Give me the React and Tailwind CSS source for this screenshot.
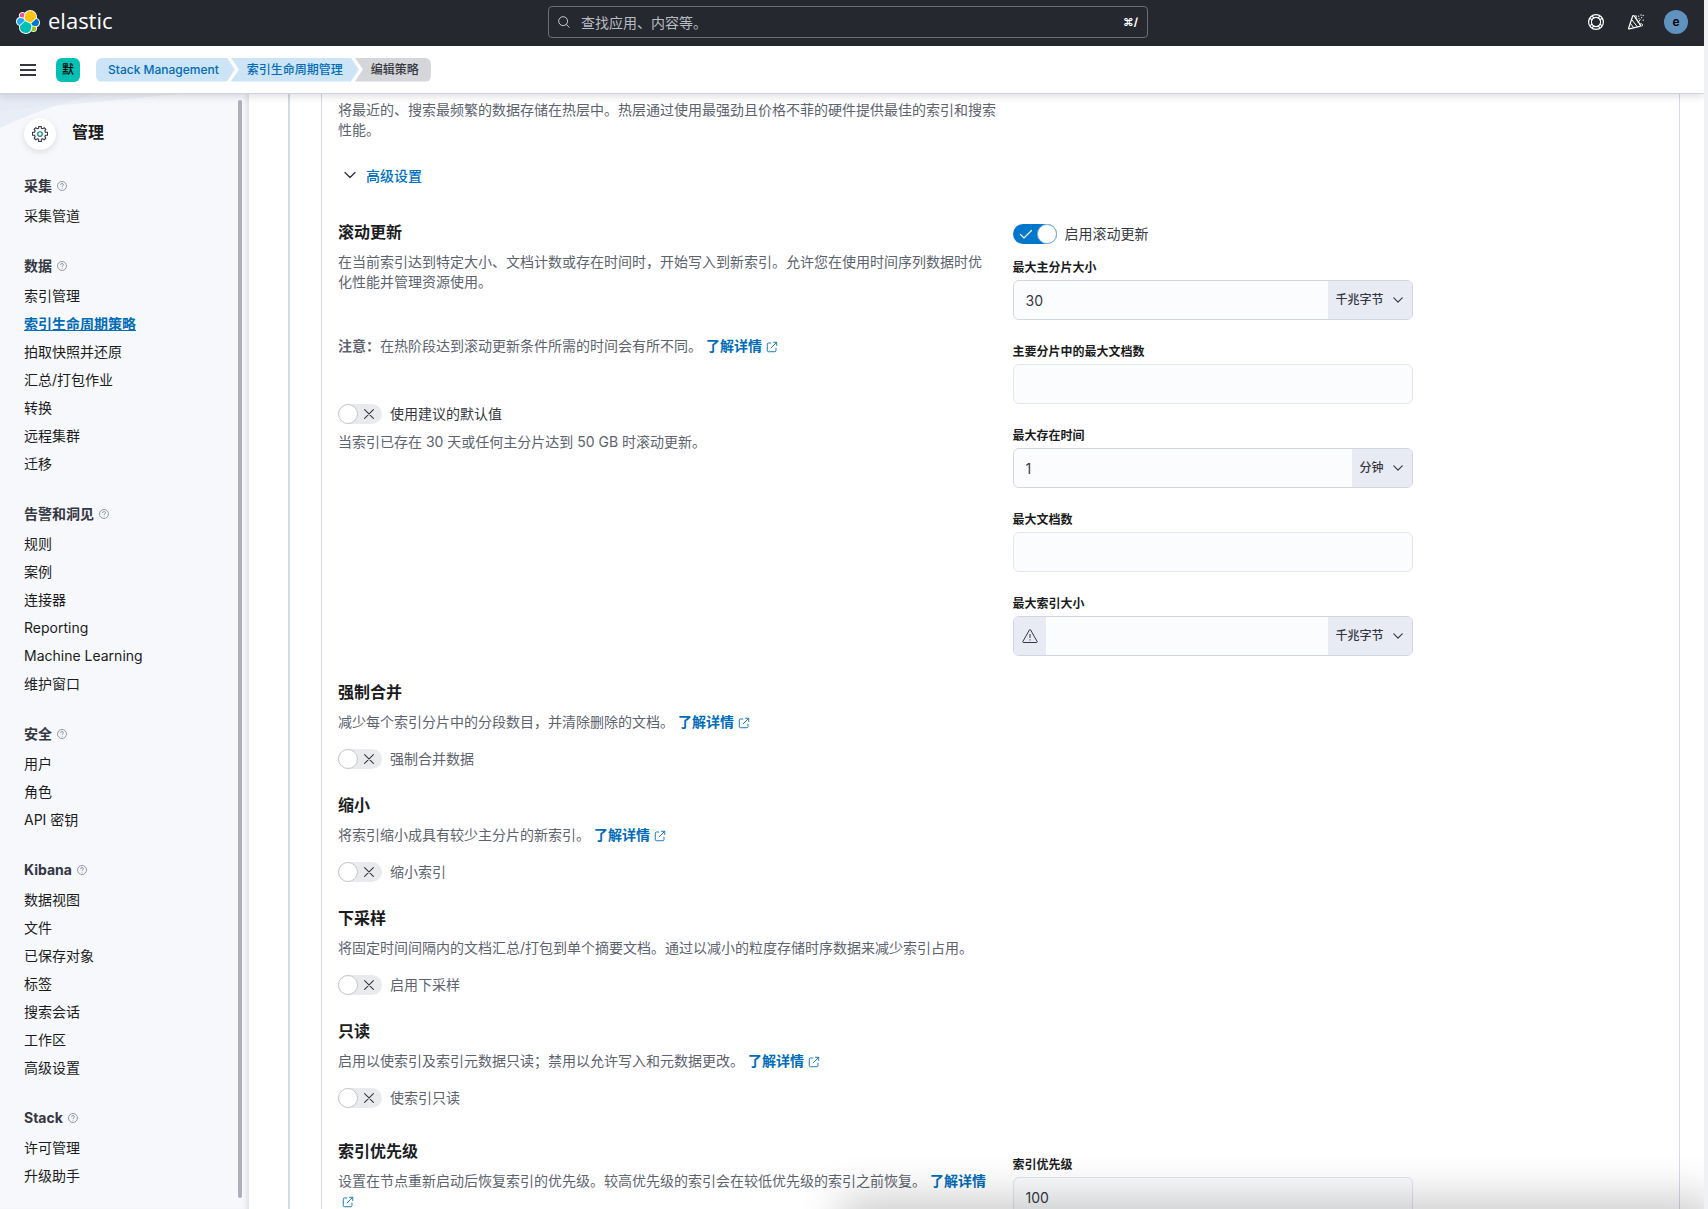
import React from "react";

const sections = [
  { title: "采集", items: ["采集管道"] },
  { title: "数据", items: ["索引管理", "索引生命周期策略", "拍取快照并还原", "汇总/打包作业", "转换", "远程集群", "迁移"], active: 1 },
  { title: "告警和洞见", items: ["规则", "案例", "连接器", "Reporting", "Machine Learning", "维护窗口"] },
  { title: "安全", items: ["用户", "角色", "API 密钥"] },
  { title: "Kibana", items: ["数据视图", "文件", "已保存对象", "标签", "搜索会话", "工作区", "高级设置"] },
  { title: "Stack", items: ["许可管理", "升级助手"] },
];

function ElasticLogo() {
  return (
    <svg className="h-6 w-6" viewBox="0 0 32 32" aria-hidden="true">
      <path fill="#fff" d="M32 16.77c0-2.68-1.66-5.02-4.16-5.94.11-.57.17-1.15.17-1.74 0-5.01-4.07-9.09-9.08-9.09a9.09 9.09 0 0 0-7.34 3.75 4.8 4.8 0 0 0-2.94-1A4.82 4.82 0 0 0 4.1 9.21 6.36 6.36 0 0 0 0 15.2c0 2.69 1.67 5.04 4.18 5.96-.11.56-.17 1.14-.17 1.72A9.07 9.07 0 0 0 20.4 28.2a4.79 4.79 0 0 0 2.96 1.02 4.82 4.82 0 0 0 4.54-6.43A6.37 6.37 0 0 0 32 16.77z" />
      <path fill="#FEC514" d="M12.58 13.787l7.002 3.211 7.066-6.213a7.849 7.849 0 00.152-1.557c0-4.287-3.464-7.774-7.722-7.774a7.713 7.713 0 00-6.376 3.371l-1.176 6.14 1.054 2.822z" />
      <path fill="#00BFB3" d="M5.333 21.214a7.902 7.902 0 00-.152 1.586c0 4.3 3.484 7.8 7.764 7.8a7.76 7.76 0 006.417-3.4l1.167-6.107-1.556-2.989-7.03-3.218-6.61 6.328z" />
      <path fill="#F04E98" d="M5.29 9.098l4.798 1.138 1.051-5.485a3.79 3.79 0 00-2.31-.786 3.813 3.813 0 00-3.79 3.83c0 .453.078.886.25 1.303z" />
      <path fill="#1BA9F5" d="M4.872 10.244a5.46 5.46 0 00-3.589 5.1 5.43 5.43 0 003.47 5.05l6.73-6.12-1.236-2.659-5.375-1.371z" />
      <path fill="#93C90E" d="M20.873 27.251a3.773 3.773 0 002.296.785 3.8 3.8 0 003.777-3.823c0-.47-.083-.9-.248-1.303l-4.788-1.127-1.037 5.468z" />
      <path fill="#0077CC" d="M21.848 20.563l5.28 1.245a5.488 5.488 0 003.59-5.106c0-2.266-1.397-4.28-3.478-5.076l-6.904 6.083 1.512 2.854z" />
    </svg>
  );
}

function HelpIcon() {
  return (
    <svg className="h-4 w-4" viewBox="0 0 16 16" fill="none" stroke="currentColor" aria-hidden="true">
      <circle cx="8" cy="8" r="7.4" strokeWidth="1.2" />
      <circle cx="8" cy="8" r="4.6" strokeWidth="1.1" />
      <path strokeWidth="1.2" d="M2.1 4.400l2.700 1.700M4.400 2.100l1.700 2.700M13.900 4.400l-2.700 1.700M11.600 2.100l-1.700 2.700M2.100 11.600l2.700-1.700M4.400 13.900l1.700-2.700M13.900 11.600l-2.700-1.700M11.600 13.900l-1.700-2.700" />
    </svg>
  );
}

function CheerIcon() {
  return (
    <svg className="h-4 w-4" viewBox="0 0 16 16" fill="none" stroke="currentColor" strokeLinecap="round" strokeLinejoin="round" aria-hidden="true">
      <path strokeWidth="1.2" d="M4.6 2.2L.6 14.2c-.1.5.2.8.7.7l10.5-2.6c.8-.2 1-.9.5-1.4L6.200 1.900c-.5-.5-1.300-.4-1.600.3z" />
      <path d="M3.600 5.500l5.700 7.200M2.300 9.300l3.300 4.300M7.500 4.800c.9-.8 1.100-2 .5-3.300M10 8.500l2.200-2.800M11.700 10.300c.9-.8 2.300-.7 2.800.2.400.8-.1 1.600-.800 1.700" />
      <path strokeWidth="1.300" d="M10.700 2.200v.01M13 1v.01M13.600 3.600v.01M15.200 6.200v.01M11 4.600v.01M15.200 1.500v.01M9.300 6.500v.01" />
    </svg>
  );
}

function GearIcon() {
  return (
    <svg className="h-4 w-4" viewBox="0 0 16 16" fill="none" aria-hidden="true">
      <path stroke="#343741" strokeWidth="1.100" strokeLinejoin="round" d="M6.700.5h2.600v1.700l1.500.6 1.300-1.100 1.800 1.800-1.100 1.300.6 1.500h2.100v2.900h-2.100l-.6 1.500 1.100 1.300-1.800 1.800-1.300-1.100-1.500.6v2.200H6.700v-2.200l-1.500-.6-1.300 1.100-1.800-1.800 1.100-1.300-.6-1.500H.5V6.300h2.100l.6-1.500-1.100-1.300 1.800-1.800 1.300 1.100 1.500-.6z" />
      <circle cx="8" cy="8" r="2.300" stroke="#017D73" strokeWidth="1.100" />
    </svg>
  );
}

function QuestionIcon() {
  return (
    <svg className="h-[10px] w-[10px] text-[#7c828e]" viewBox="0 0 16 16" fill="none" stroke="currentColor" strokeWidth="1.300" aria-hidden="true">
      <circle cx="8" cy="8" r="7.200" />
      <path d="M5.700 6.300c0-1.400 1-2.300 2.300-2.300s2.300.8 2.300 2c0 1.700-2.300 1.700-2.300 3.500M8 10.900v1.400" />
    </svg>
  );
}

function ExternalLink({ children }) {
  return (
    <a href="#" className="font-bold text-[#006bb8]">
      {children}
      <svg className="ml-1 inline h-3 w-3 align-[-2px]" viewBox="0 0 16 16" fill="none" stroke="currentColor" strokeWidth="1.200" aria-hidden="true">
        <path d="M7 2.700H3.200c-.9 0-1.500.6-1.500 1.500v8.600c0 .9.600 1.500 1.500 1.500h8.600c.9 0 1.500-.6 1.500-1.500V9M9.500 1.700h4.800v4.800M14.100 1.900L6.500 9.500" />
      </svg>
    </a>
  );
}

function Chevron({ className }) {
  return (
    <svg className={className} viewBox="0 0 12 8" fill="none" stroke="currentColor" strokeWidth="1.400" strokeLinecap="round" strokeLinejoin="round" aria-hidden="true">
      <path d="M1 1.500l5 5 5-5" />
    </svg>
  );
}

function Switch({ label, on = false, dark = false }) {
  return (
    <label className="flex h-5 items-center gap-2 text-[14px] leading-5">
      <span className="relative flex h-5 w-11 shrink-0">
        <input type="checkbox" role="switch" defaultChecked={on} className="peer h-5 w-11 appearance-none rounded-full bg-[#e9eaee] checked:bg-[#0077cc]" />
        {on ? (
          <svg className="pointer-events-none absolute left-[6px] top-1 h-3 w-[14px] text-white" viewBox="0 0 14 12" fill="none" stroke="currentColor" strokeWidth="1.200" strokeLinecap="round" aria-hidden="true">
            <path d="M1.500 6.500l3.500 3.500 7.500-7.500" />
          </svg>
        ) : (
          <svg className="pointer-events-none absolute right-2 top-[5px] h-[10px] w-[10px] text-[#343741]" viewBox="0 0 10 10" fill="none" stroke="currentColor" strokeWidth="1.100" strokeLinecap="round" aria-hidden="true">
            <path d="M.600.600l8.800 8.800M9.400.600L.600 9.400" />
          </svg>
        )}
        <span className="pointer-events-none absolute left-0 top-0 h-5 w-5 rounded-full border border-[#c4c6cb] bg-white peer-checked:left-6 peer-checked:border-[#8fb6d6]" />
      </span>
      <span className={dark ? "text-[#343741]" : "text-[#5c626e]"}>{label}</span>
    </label>
  );
}

function Field({ id, label, value = "", unit, warn }) {
  const grouped = Boolean(unit);
  return (
    <div className="flex max-w-[400px] flex-col gap-1">
      <label htmlFor={id} className="text-[12px] font-bold leading-4 text-[#1a1c21]">{label}</label>
      <div className={grouped ? "flex h-10 overflow-hidden rounded-md border border-[#d0d5e6] bg-[#fbfcfd]" : "flex h-10 overflow-hidden rounded-md border border-[#e2e4ef] bg-[#fbfcfd]"}>
        {warn && (
          <span className="flex w-8 shrink-0 items-center justify-center bg-[#e9ebf4] text-[#343741]">
            <svg className="h-4 w-4" viewBox="0 0 16 16" fill="none" stroke="currentColor" strokeLinejoin="round" aria-hidden="true">
              <path d="M7.500 1.800c.2-.4.800-.4 1 0l6.700 11.800c.2.400 0 .900-.5.900H1.300c-.5 0-.7-.5-.5-.9zM8 6v4M8 11.300v1.200" />
            </svg>
          </span>
        )}
        <input id={id} type="text" defaultValue={value} className="min-w-0 flex-1 bg-transparent px-3 text-[14px] text-[#343741] outline-none" />
        {unit && (
          <span className="relative flex shrink-0 items-center bg-[#e9ebf4] text-[#343741]">
            <select aria-label={label + "单位"} className="h-full appearance-none bg-transparent pl-2 pr-[27px] text-[12px] font-medium outline-none">
              <option>{unit}</option>
            </select>
            <Chevron className="pointer-events-none absolute right-[9px] h-2 w-[10px]" />
          </span>
        )}
      </div>
    </div>
  );
}

function Title({ children }) {
  return <h3 className="text-[16px] font-bold leading-6 text-[#1a1c21]">{children}</h3>;
}

function Text({ children, className = "" }) {
  return <p className={"text-[14px] leading-5 text-[#5c626e] " + className}>{children}</p>;
}

function ToggleSection({ title, text, link, label }) {
  return (
    <section className="flex flex-col">
      <Title>{title}</Title>
      <Text className="mt-2">{text}{link && <> <ExternalLink>了解详情</ExternalLink></>}</Text>
      <div className="mt-[17px]"><Switch label={label} /></div>
    </section>
  );
}

export default function App() {
  return (
    <div className="h-screen overflow-hidden bg-[#f0f1f5] pr-1 font-['Inter','Noto_Sans_CJK_SC',sans-serif] text-[#343741]">
      <div className="relative flex h-full flex-col overflow-hidden bg-white">
        <header className="grid h-[46px] shrink-0 grid-cols-[1fr_600px_1fr] items-center bg-[#25282f] pb-[2px] pl-4 pr-6 text-white">
          <a href="#" className="flex items-center gap-2">
            <ElasticLogo />
            <span className="pb-1 font-['Open_Sans'] text-[22px] font-normal leading-6">elastic</span>
          </a>
          <div className="flex h-8 items-center rounded border border-[#6b6e76] px-[9px]">
            <svg className="h-3 w-3 text-[#dfe5ef]" viewBox="0 0 14 14" fill="none" stroke="currentColor" aria-hidden="true">
              <circle cx="6" cy="6" r="5.200" />
              <path d="M9.700 9.700l3.600 3.800" />
            </svg>
            <input type="search" aria-label="搜索" placeholder="查找应用、内容等。" className="ml-[11px] min-w-0 flex-1 bg-transparent text-[14px] outline-none placeholder:text-[#b8bcc4] placeholder:opacity-100" />
            <kbd className="font-['Inter','DejaVu_Sans'] text-[11px] font-bold">⌘/</kbd>
          </div>
          <div className="-mr-2 flex items-center justify-end gap-6">
            <button type="button" aria-label="帮助"><HelpIcon /></button>
            <button type="button" aria-label="新增功能"><CheerIcon /></button>
            <button type="button" aria-label="用户" className="-ml-1 h-6 w-6 rounded-full bg-[#6092c0] text-[12px] font-semibold leading-6 text-black">e</button>
          </div>
        </header>

        <div className="relative z-20 flex h-12 shrink-0 items-center border-b border-[#cfd3df] bg-white px-5 shadow-[0_2px_8px_rgba(0,0,0,0.14)]">
          <button type="button" aria-label="菜单" className="flex w-4 flex-col gap-[3px]">
            <span className="h-[2px] bg-[#343741]" />
            <span className="h-[2px] bg-[#343741]" />
            <span className="h-[2px] bg-[#343741]" />
          </button>
          <button type="button" aria-label="默认空间" className="ml-5 h-6 w-6 rounded-md bg-[#00bfb3] text-[12px] font-medium leading-6 text-black">默</button>
          <nav aria-label="面包屑" className="ml-4 flex h-6 text-[12px] font-medium leading-6">
            <a href="#" className="rounded-l-md bg-[#cce4f5] pl-3 pr-4 text-[#006bb8] [clip-path:polygon(0_0,calc(100%-8px)_0,100%_50%,calc(100%-8px)_100%,0_100%)]">Stack Management</a>
            <a href="#" className="-ml-1 bg-[#cce4f5] px-4 text-[#006bb8] [clip-path:polygon(0_0,calc(100%-8px)_0,100%_50%,calc(100%-8px)_100%,0_100%,8px_50%)]">索引生命周期管理</a>
            <span className="-ml-1 rounded-r-md bg-[#d5d6d9] pl-4 pr-3 text-[#343741] [clip-path:polygon(0_0,100%_0,100%_100%,0_100%,8px_50%)]">编辑策略</span>
          </nav>
        </div>

        <div className="flex min-h-0 flex-1">
          <aside className="relative z-10 w-[249px] shrink-0 overflow-hidden bg-[#f7f8fc] shadow-[inset_-5px_0_5px_-3px_rgba(100,106,130,0.2)]">
            <svg className="absolute left-0 top-0 h-9 w-[180px]" viewBox="0 0 180 36" aria-hidden="true">
              <path d="M0 0h180L0 17z" fill="#ebeff7" />
              <path d="M0 0h94Q40 15 0 34z" fill="#e3e9f4" fillOpacity=".7" />
            </svg>
            <span className="absolute bottom-[11px] right-[7px] top-[6px] w-1 rounded-full bg-[#abb0ba]" />
            <div className="relative px-6 pt-6">
              <div className="flex h-8 items-center gap-4">
                <span className="flex h-8 w-8 items-center justify-center rounded-full bg-white shadow-[0_2px_6px_rgba(0,0,0,0.12)]"><GearIcon /></span>
                <h1 className="pb-1 text-[16px] font-bold leading-6 text-[#1a1c21]">管理</h1>
              </div>
              <nav aria-label="管理" className="mt-6 flex flex-col gap-6">
                {sections.map((s) => (
                  <section key={s.title}>
                    <h2 className="mb-1 flex h-6 items-center gap-[5px] text-[14px] font-bold leading-6">{s.title}<QuestionIcon /></h2>
                    <ul>
                      {s.items.map((item, i) => (
                        <li key={item} className="h-7 text-[14px] leading-7">
                          <a href="#" className={i === s.active ? "font-bold text-[#006bb8] underline" : "text-[#1a1c21]"}>{item}</a>
                        </li>
                      ))}
                    </ul>
                  </section>
                ))}
              </nav>
            </div>
          </aside>

          <main className="min-w-0 flex-1 overflow-hidden pl-[39px] pr-6">
            <div className="border-l-2 border-[#d3dae6] pl-[31px]">
              <div className="border-x border-[#d3dae6] px-4 pt-[6px]">
                <Text className="max-w-1/2">将最近的、搜索最频繁的数据存储在热层中。热层通过使用最强劲且价格不菲的硬件提供最佳的索引和搜索性能。</Text>
                <button type="button" className="mt-[23px] flex h-6 items-center gap-[10px] pl-[6px] text-[14px] font-medium text-[#0071c2]">
                  <Chevron className="h-2 w-3 text-[#343741]" />
                  高级设置
                </button>

                <div className="mt-[33px] grid grid-cols-2 gap-6">
                  <div className="flex flex-col">
                    <Title>滚动更新</Title>
                    <Text className="mt-2">在当前索引达到特定大小、文档计数或存在时间时，开始写入到新索引。允许您在使用时间序列数据时优化性能并管理资源使用。</Text>
                    <Text className="mt-11"><strong className="font-bold">注意：</strong>在热阶段达到滚动更新条件所需的时间会有所不同。 <ExternalLink>了解详情</ExternalLink></Text>
                    <div className="mt-12"><Switch label="使用建议的默认值" dark /></div>
                    <Text className="mt-2">当索引已存在 30 天或任何主分片达到 50 GB 时滚动更新。</Text>
                  </div>
                  <div className="flex flex-col pt-1">
                    <Switch label="启用滚动更新" on dark />
                    <div className="mt-4 flex flex-col gap-6">
                      <Field id="shard-size" label="最大主分片大小" value="30" unit="千兆字节" />
                      <Field id="shard-docs" label="主要分片中的最大文档数" />
                      <Field id="max-age" label="最大存在时间" value="1" unit="分钟" />
                      <Field id="max-docs" label="最大文档数" />
                      <Field id="index-size" label="最大索引大小" unit="千兆字节" warn />
                    </div>
                  </div>
                </div>

                <div className="mt-6 flex flex-col gap-6">
                  <ToggleSection title="强制合并" text="减少每个索引分片中的分段数目，并清除删除的文档。" link label="强制合并数据" />
                  <ToggleSection title="缩小" text="将索引缩小成具有较少主分片的新索引。" link label="缩小索引" />
                  <ToggleSection title="下采样" text="将固定时间间隔内的文档汇总/打包到单个摘要文档。通过以减小的粒度存储时序数据来减少索引占用。" label="启用下采样" />
                  <ToggleSection title="只读" text="启用以使索引及索引元数据只读；禁用以允许写入和元数据更改。" link label="使索引只读" />
                </div>

                <div className="mt-[31px] grid grid-cols-2 gap-6">
                  <div>
                    <Title>索引优先级</Title>
                    <Text className="mt-2">设置在节点重新启动后恢复索引的优先级。较高优先级的索引会在较低优先级的索引之前恢复。 <ExternalLink>了解详情</ExternalLink></Text>
                  </div>
                  <div className="pt-[18px]">
                    <Field id="priority" label="索引优先级" value="100" />
                  </div>
                </div>
              </div>
            </div>
          </main>
        </div>
        <div className="pointer-events-none absolute left-1/2 right-0 top-full z-30 h-20 shadow-[0_0_44px_12px_rgba(0,0,0,0.2)]" />
      </div>
    </div>
  );
}
